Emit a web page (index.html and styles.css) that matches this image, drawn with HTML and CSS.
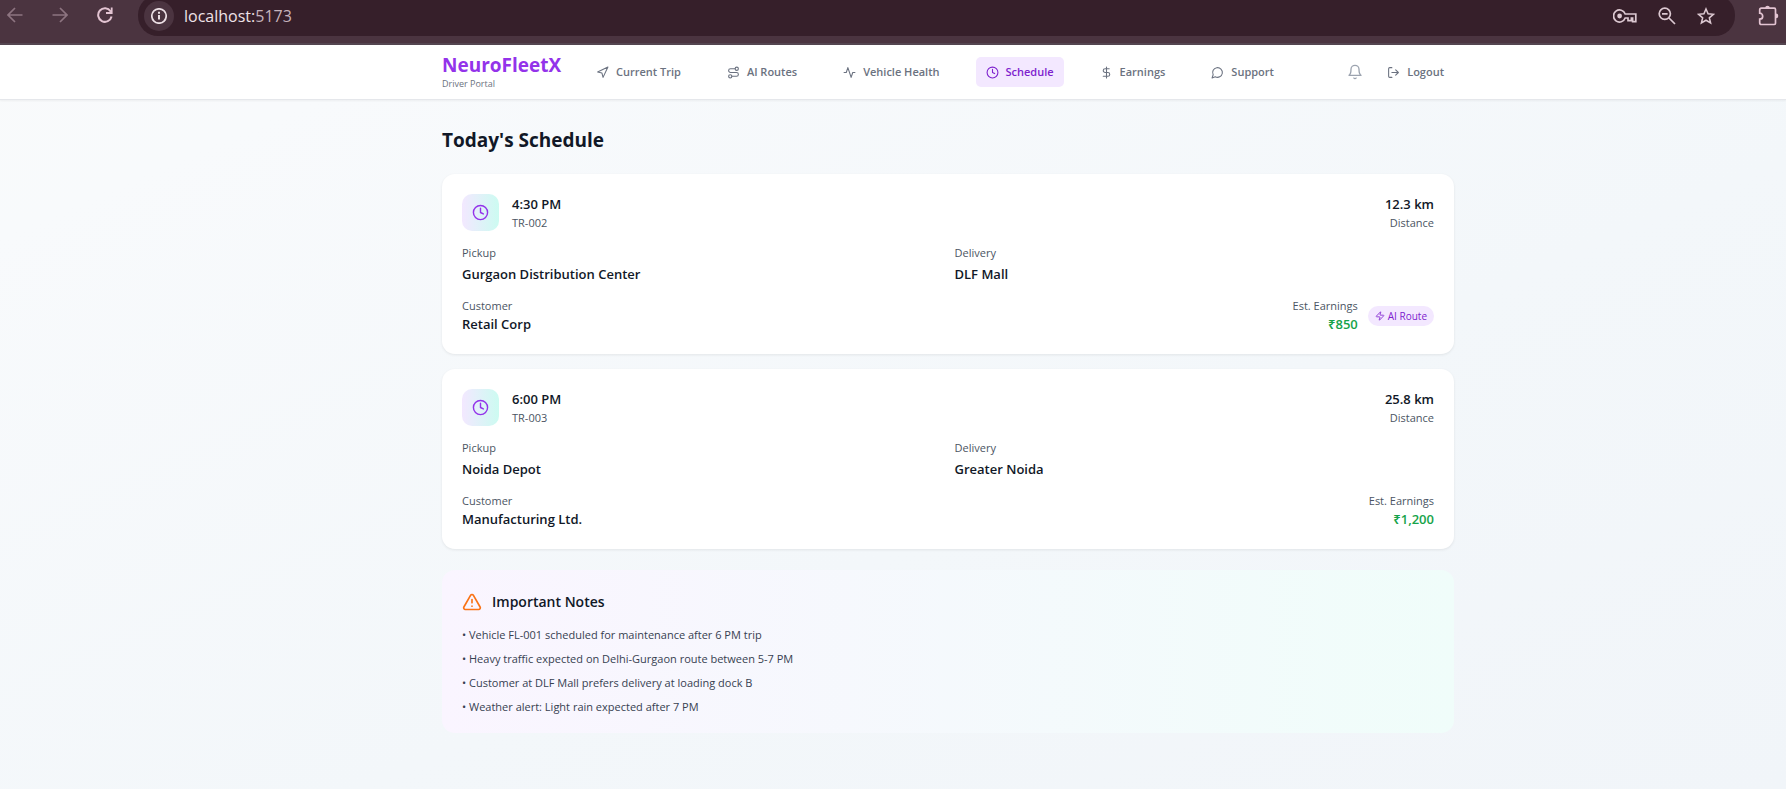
FILE: index.html
```html
<!DOCTYPE html>
<html lang="en">
<head>
<meta charset="utf-8">
<title>NeuroFleetX - Driver Portal</title>
<link rel="stylesheet" href="styles.css">
</head>
<body>
<svg class="sprite" aria-hidden="true">
  <symbol id="clock" viewBox="0 0 24 24"><circle cx="12" cy="12" r="10"/><path d="M12 6v6l4 2"/></symbol>
</svg>

<div class="browser">
  <div class="browser-controls">
    <button class="browser-button dim" aria-label="Back"><svg class="icon-nav" viewBox="0 0 16 16"><path d="M15.5 8H1.5M8 1L1 8l7 7"/></svg></button>
    <button class="browser-button dim" aria-label="Forward"><svg class="icon-nav" viewBox="0 0 16 16"><path d="M.5 8h14M8 1l7 7-7 7"/></svg></button>
    <button class="browser-button" aria-label="Reload"><svg class="icon-nav" viewBox="0 0 16 16"><path stroke-width="2" d="M13.6 4.2A6.8 6.8 0 1 0 14.6 9.6"/><path fill="currentColor" stroke="none" d="M15.6.4v6.6H9V5h3.2l1.6-1.6V.4z"/></svg></button>
  </div>
  <div class="address-bar">
    <button class="site-info" aria-label="Site information"><svg class="icon-nav" viewBox="0 0 16 16"><circle cx="8" cy="8" r="7.2"/><path stroke-width="2" d="M8 7v4.6M8 3.8v1.9"/></svg></button>
    <span class="url">localhost:<span class="port">5173</span></span>
    <div class="address-actions">
      <button class="browser-button" aria-label="Passwords"><svg class="icon-key" viewBox="0 0 24 14"><path d="M12.2 5A6 6 0 1 0 12.2 9H15v2.6h3.4V9h1.2v3.6h3.2V5z"/><circle cx="6.6" cy="7" r="2.4" fill="currentColor" stroke="none"/></svg></button>
      <button class="browser-button" aria-label="Zoom out"><svg class="icon-zoom" viewBox="0 0 18 18"><circle cx="6.8" cy="6.8" r="5.6"/><path d="M4 6.8h5.6M11 11l6 6"/></svg></button>
      <button class="browser-button" aria-label="Bookmark"><svg class="icon-zoom" viewBox="0 0 20 20"><path d="M10 2.2l2.3 5.4 5.9.5-4.5 3.9 1.4 5.7-5.1-3-5.1 3L6.300 12 1.800 8.100l5.900-.5z"/></svg></button>
    </div>
  </div>
  <button class="browser-button" aria-label="Extensions"><svg class="icon-puzzle" viewBox="0 0 21 21"><path d="M3.500 3.200H16.300a1.200 1.200 0 0 1 1.200 1.200V18.300a1.200 1.200 0 0 1-1.200 1.200H3.500a1.800 1.800 0 0 1-1.800-1.800v-3.500a3 3 0 0 0 0-6V5a1.800 1.800 0 0 1 1.800-1.800z"/><path fill="currentColor" stroke="none" d="M7.200 3a2.300 2.300 0 0 1 4.600 0zM18 8.600a2.300 2.300 0 0 1 0 4.600z"/></svg></button>
</div>

<header class="topbar">
  <div class="container topbar-inner">
    <div class="brand">
      <span class="brand-name">NeuroFleetX</span>
      <span class="brand-sub">Driver Portal</span>
    </div>
    <nav class="nav">
      <a class="nav-link" href="#trip"><svg class="icon" viewBox="0 0 24 24"><path d="M3 11 22 2l-9 19-2-8z"/></svg>Current Trip</a>
      <a class="nav-link" href="#routes"><svg class="icon" viewBox="0 0 24 24"><circle cx="6" cy="19" r="3"/><path d="M9 19h8.500a3.500 3.500 0 0 0 0-7h-11a3.500 3.500 0 0 1 0-7H15"/><circle cx="18" cy="5" r="3"/></svg>AI Routes</a>
      <a class="nav-link" href="#health"><svg class="icon" viewBox="0 0 24 24"><path d="M22 12h-4l-3 9L9 3l-3 9H2"/></svg>Vehicle Health</a>
      <a class="nav-link active" href="#schedule"><svg class="icon"><use href="#clock"/></svg>Schedule</a>
      <a class="nav-link" href="#earnings"><svg class="icon" viewBox="0 0 24 24"><path d="M12 2v20M17 5H9.500a3.500 3.500 0 0 0 0 7h5a3.500 3.500 0 0 1 0 7H6"/></svg>Earnings</a>
      <a class="nav-link" href="#support"><svg class="icon" viewBox="0 0 24 24"><path d="M7.900 20A9 9 0 1 0 4 16.100L2 22z"/></svg>Support</a>
    </nav>
    <div class="account">
      <button class="bell" aria-label="Notifications"><svg class="icon-bell" viewBox="0 0 24 24"><path d="M6 8a6 6 0 0 1 12 0c0 7 3 9 3 9H3s3-2 3-9"/><path d="M10.300 21a1.940 1.940 0 0 0 3.400 0"/></svg></button>
      <button class="nav-link"><svg class="icon" viewBox="0 0 24 24"><path d="M9 21H5a2 2 0 0 1-2-2V5a2 2 0 0 1 2-2h4M16 17l5-5-5-5M21 12H9"/></svg>Logout</button>
    </div>
  </div>
</header>

<main class="container content">
  <h1 class="page-title">Today's Schedule</h1>

  <section class="trips">
    <article class="card">
      <div class="row">
        <div class="trip-head">
          <span class="tile"><svg class="icon-tile"><use href="#clock"/></svg></span>
          <div><p class="value">4:30 PM</p><p class="label">TR-002</p></div>
        </div>
        <div class="end"><p class="value">12.3 km</p><p class="label">Distance</p></div>
      </div>
      <div class="places">
        <div class="place"><p class="label">Pickup</p><p class="value">Gurgaon Distribution Center</p></div>
        <div class="place"><p class="label">Delivery</p><p class="value">DLF Mall</p></div>
      </div>
      <div class="row">
        <div><p class="label">Customer</p><p class="value">Retail Corp</p></div>
        <div class="earnings">
          <div class="end"><p class="label">Est. Earnings</p><p class="value money">₹850</p></div>
          <span class="badge"><svg class="icon-badge" viewBox="0 0 24 24"><path d="M4 14a1 1 0 0 1-.78-1.630l9.900-10.200a.5.5 0 0 1 .86.460l-1.920 6.020A1 1 0 0 0 13 10h7a1 1 0 0 1 .78 1.630l-9.900 10.200a.5.5 0 0 1-.86-.460l1.920-6.020A1 1 0 0 0 11 14z"/></svg>AI Route</span>
        </div>
      </div>
    </article>

    <article class="card">
      <div class="row">
        <div class="trip-head">
          <span class="tile"><svg class="icon-tile"><use href="#clock"/></svg></span>
          <div><p class="value">6:00 PM</p><p class="label">TR-003</p></div>
        </div>
        <div class="end"><p class="value">25.8 km</p><p class="label">Distance</p></div>
      </div>
      <div class="places">
        <div class="place"><p class="label">Pickup</p><p class="value">Noida Depot</p></div>
        <div class="place"><p class="label">Delivery</p><p class="value">Greater Noida</p></div>
      </div>
      <div class="row">
        <div><p class="label">Customer</p><p class="value">Manufacturing Ltd.</p></div>
        <div class="end"><p class="label">Est. Earnings</p><p class="value money">₹1,200</p></div>
      </div>
    </article>
  </section>

  <section class="notes">
    <h2 class="notes-title"><svg class="icon-alert" viewBox="0 0 24 24"><path d="m21.730 18-8-14a2 2 0 0 0-3.480 0l-8 14A2 2 0 0 0 4 21h16a2 2 0 0 0 1.730-3M12 9v4M12 17h.01"/></svg>Important Notes</h2>
    <ul class="notes-list">
      <li>• Vehicle FL-001 scheduled for maintenance after 6 PM trip</li>
      <li>• Heavy traffic expected on Delhi-Gurgaon route between 5-7 PM</li>
      <li>• Customer at DLF Mall prefers delivery at loading dock B</li>
      <li>• Weather alert: Light rain expected after 7 PM</li>
    </ul>
  </section>
</main>
</body>
</html>
```
FILE: styles.css
```css
* { box-sizing: border-box; }

body {
  margin: 0;
  min-height: 100vh;
  font-family: "Open Sans", "Noto Sans", sans-serif;
  font-size: 13px;
  line-height: 20px;
  color: #111827;
  background: linear-gradient(to bottom right, #f9fafb, #f8fafc 15%, #f3f7fa 60%, #f1f5f9);
}

h1, h2, p, ul { margin: 0; padding: 0; }
ul { list-style: none; }
button { padding: 0; border: 0; background: none; font: inherit; color: inherit; cursor: pointer; }
svg { display: block; flex: none; fill: none; stroke: currentColor; stroke-width: 2; stroke-linecap: round; stroke-linejoin: round; }
.sprite { position: absolute; width: 0; height: 0; }

/* Browser toolbar */
.browser {
  display: flex;
  align-items: flex-start;
  height: 45px;
  padding: 0 7px;
  overflow: hidden;
  background: #4b3440;
  border-bottom: 2px solid #544550;
  color: #e3c4d2;
}
.browser svg { stroke-width: 1.7; stroke-linecap: butt; stroke-linejoin: miter; }
.browser-controls { display: flex; gap: 29px; }
.browser-button { display: flex; align-items: center; height: 30px; }
.dim { color: #8d7480; }
.icon-nav { width: 16px; height: 16px; }
.icon-key { width: 24px; height: 14px; }
.icon-zoom { width: 18px; height: 18px; }
.icon-puzzle { width: 21px; height: 21px; }
.address-bar {
  display: flex;
  flex: 1;
  align-items: center;
  height: 41px;
  margin: -5px 23px 0 25px;
  padding: 0 20px 0 6px;
  border-radius: 20px;
  background: #361f2a;
}
.site-info { display: grid; place-items: center; width: 30px; height: 30px; border-radius: 50%; background: #4b3440; color: #ecdfe4; }
.url { margin-left: 10px; font-size: 16px; color: #efe2e7; }
.port { color: #c6b3bc; }
.address-actions { display: flex; gap: 21px; margin-left: auto; color: #dcc8d1; }

/* Page frame */
.topbar, .content { padding-left: 110px; }
.container { width: 100%; max-width: 1012px; margin: 0 auto; }
.topbar { background: #fff; border-bottom: 1px solid #e5e7eb; box-shadow: 0 1px 2px rgba(0, 0, 0, .05); }
.topbar-inner { display: flex; align-items: center; height: 54px; }
.brand { display: flex; flex-direction: column; width: 118px; }
.brand-name { font-size: 19px; font-weight: 700; line-height: 23px; color: #9333ea; }
.brand-sub { font-size: 9px; line-height: 13px; color: #6b7280; }
.nav { display: flex; gap: 26px; margin-left: 26px; }
.nav-link {
  display: flex;
  align-items: center;
  gap: 7px;
  height: 30px;
  padding: 0 10px;
  border-radius: 5px;
  font-size: 11px;
  font-weight: 600;
  white-space: nowrap;
  color: #6b7280;
  text-decoration: none;
}
.nav-link.active { background: #f3e8ff; color: #7e22ce; }
.icon { width: 13px; height: 13px; }
.account { display: flex; align-items: center; gap: 14px; margin-left: auto; }
.bell { color: #9ca3af; }
.icon-bell { width: 16px; height: 16px; }

.content { max-width: 1122px; padding-top: 27px; padding-bottom: 27px; }
.page-title { margin-bottom: 20px; font-size: 19px; font-weight: 700; line-height: 27px; }

/* Trip cards */
.trips { display: grid; gap: 15px; }
.card { display: grid; gap: 13px; padding: 20px; border-radius: 13px; background: #fff; box-shadow: 0 1px 3px rgba(0, 0, 0, .08); }
.row, .trip-head, .earnings { display: flex; align-items: center; }
.row { justify-content: space-between; }
.trip-head { gap: 13px; }
.tile { display: grid; place-items: center; width: 37px; height: 37px; border-radius: 10px; background: linear-gradient(to right, #f3e8ff, #ccfbf1); color: #9333ea; }
.icon-tile { width: 17px; height: 17px; }
.value { font-weight: 600; }
.label { font-size: 11px; line-height: 17px; color: #4b5563; }
.end { text-align: right; }
.places { display: grid; grid-template-columns: 1fr 1fr; gap: 13px; }
.place { display: grid; gap: 3px; }
.money { color: #16a34a; }
.earnings { gap: 10px; }
.badge { display: flex; align-items: center; gap: 3px; height: 20px; padding: 0 7px; border-radius: 10px; background: #f3e8ff; font-size: 10px; color: #7e22ce; }
.icon-badge { width: 10px; height: 10px; }

/* Notes */
.notes { margin-top: 21px; padding: 20px 20px 18px; border-radius: 13px; background: linear-gradient(to right, #faf5ff, #f0fdfa); }
.notes-title { display: flex; align-items: center; gap: 10px; margin-bottom: 13px; font-size: 14px; font-weight: 600; line-height: 23px; }
.icon-alert { width: 20px; height: 20px; color: #f97316; }
.notes-list { display: grid; gap: 7px; font-size: 11px; line-height: 17px; color: #374151; }
```
